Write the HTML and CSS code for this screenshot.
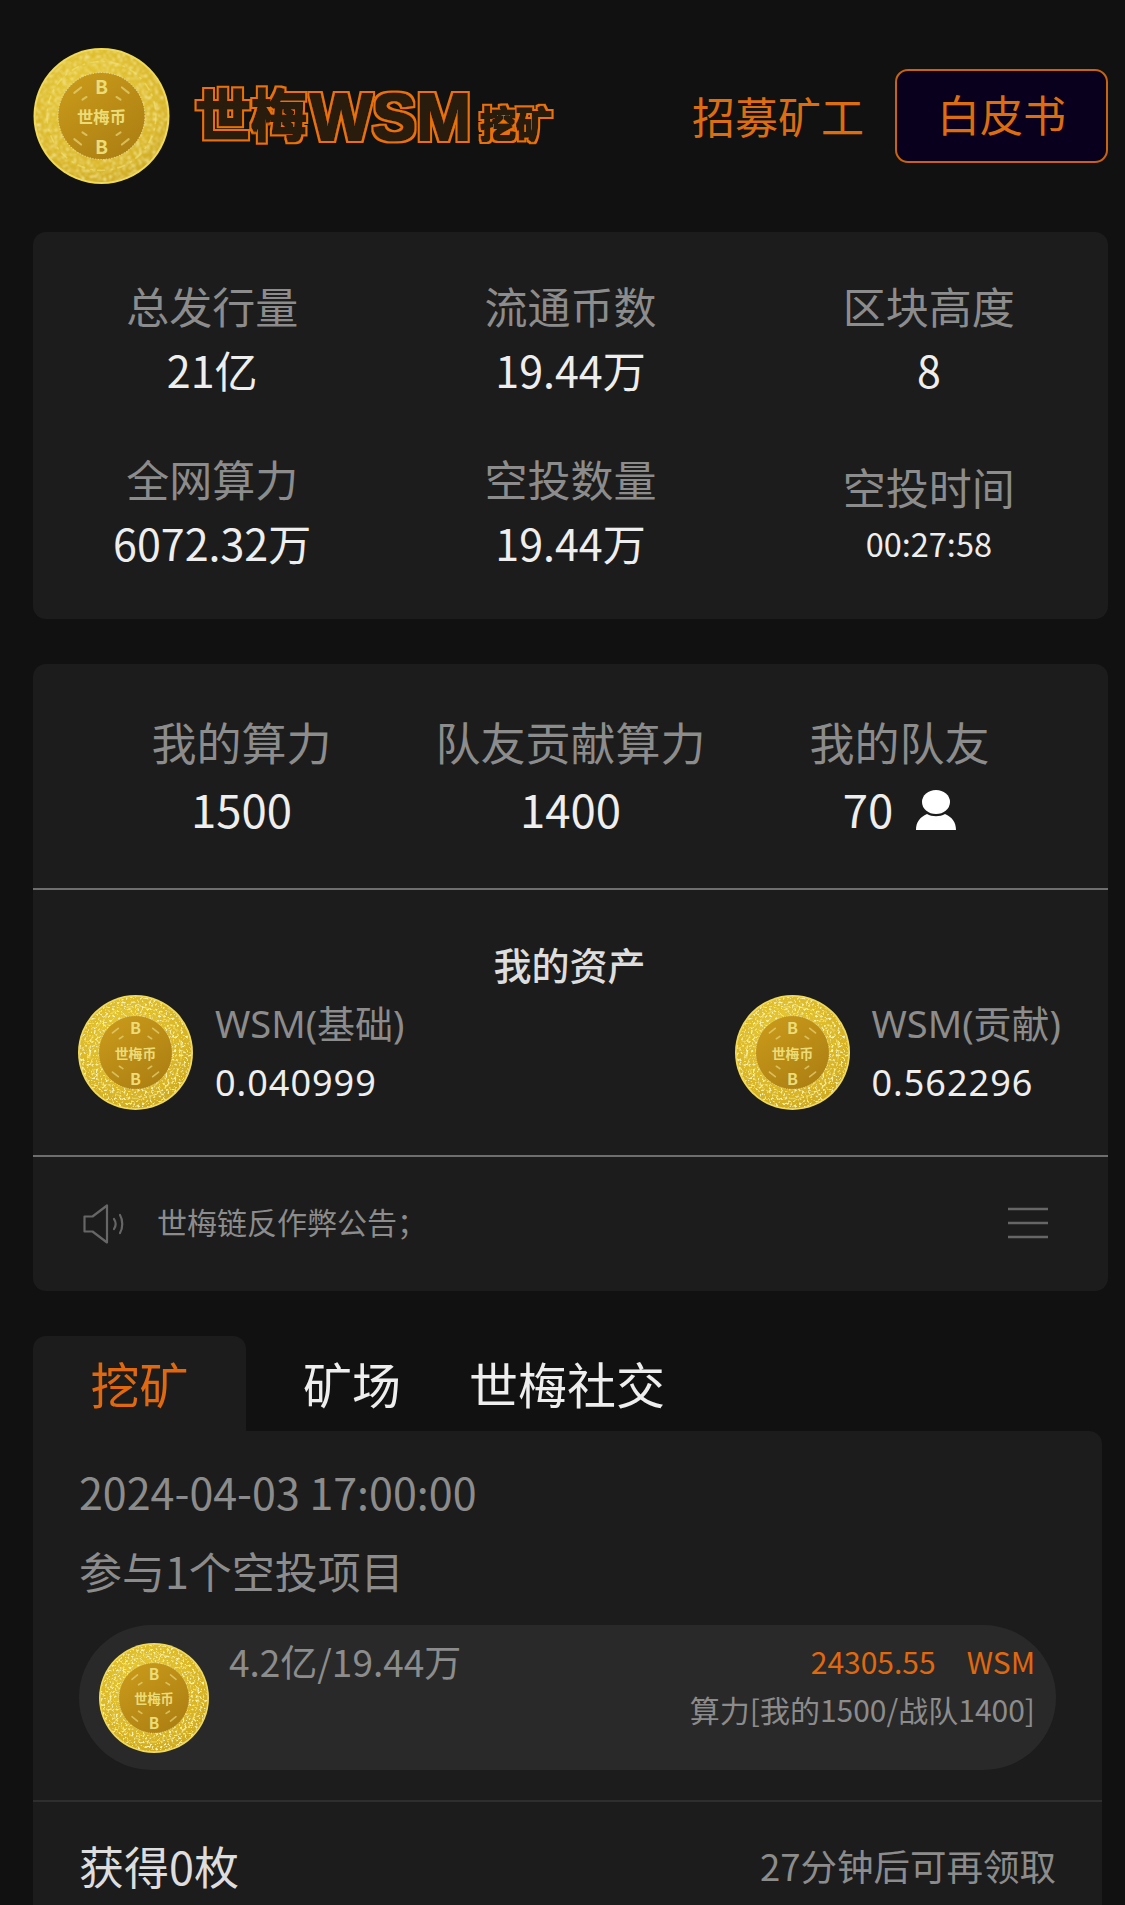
FILE: index.html
```html
<!DOCTYPE html>
<html lang="zh-CN">
<head>
<meta charset="utf-8">
<title>世梅WSM挖矿</title>
<link rel="stylesheet" href="styles.css">
</head>
<body>
<svg class="defs" width="0" height="0" aria-hidden="true">
  <defs>
    <radialGradient id="ringFill" cx="42%" cy="35%" r="75%">
      <stop offset="0" stop-color="#e8cb36"/>
      <stop offset="0.7" stop-color="#d9b526"/>
      <stop offset="1" stop-color="#c9a41e"/>
    </radialGradient>
    <linearGradient id="innerFill" x1="0" y1="0" x2="0.7" y2="1">
      <stop offset="0" stop-color="#cb9c1a"/>
      <stop offset="1" stop-color="#ad8013"/>
    </linearGradient>
    <filter id="speckle" x="0" y="0" width="100%" height="100%">
      <feTurbulence type="fractalNoise" baseFrequency="0.5" numOctaves="2" seed="7" result="n"/>
      <feColorMatrix in="n" type="matrix" values="0 0 0 0 0.96  0 0 0 0 0.88  0 0 0 0 0.45  0 0 0 -5 2.4" result="s"/>
      <feGaussianBlur in="s" stdDeviation="0.6" result="b"/>
      <feComposite in="b" in2="SourceGraphic" operator="in"/>
    </filter>
    <filter id="logoOutline" filterUnits="userSpaceOnUse" x="0" y="0" width="365" height="95">
      <feMorphology in="SourceAlpha" operator="dilate" radius="2.8" result="wide"/>
      <feFlood flood-color="#e8700a"/>
      <feComposite in2="wide" operator="in" result="edge"/>
      <feMorphology in="SourceAlpha" operator="dilate" radius="0.6" result="thick"/>
      <feFlood flood-color="#2a1a10"/>
      <feComposite in2="thick" operator="in" result="core"/>
      <feMerge result="all"><feMergeNode in="edge"/><feMergeNode in="core"/></feMerge>
      <feGaussianBlur in="all" stdDeviation="0.4"/>
    </filter>
    <symbol id="coin" viewBox="0 0 100 100">
      <circle cx="50" cy="50" r="50" fill="#f0da58"/>
      <circle cx="50" cy="50" r="48.500" fill="url(#ringFill)"/>
      <circle cx="50" cy="50" r="48.500" fill="#fff" filter="url(#speckle)"/>
      <circle cx="50" cy="50" r="40" fill="none" stroke="#f2e274" stroke-width="1.2" stroke-dasharray="6 3 2 4" opacity="0.6"/>
      <circle cx="50" cy="50" r="32" fill="url(#innerFill)" stroke="#e6d582" stroke-width="0.8" stroke-dasharray="1 1"/>
      <g stroke="#e8d578" stroke-width="1.5" stroke-linecap="round" opacity="0.7">
        <path d="M30 33l5-4M36 38l3-2M70 33l-5-4M64 38l-3-2"/>
        <path d="M30 67l5 4M36 62l3 2M70 67l-5 4M64 62l-3 2"/>
      </g>
      <g class="coin-text">
        <text x="50" y="34" font-size="14">B</text>
        <text x="50" y="78" font-size="14">B</text>
        <text x="50" y="55.500" font-size="12">世梅币</text>
      </g>
    </symbol>
  </defs>
</svg>

<div class="page">
  <header class="header">
    <svg class="coin coin-logo"><use href="#coin"/></svg>
    <svg class="logo" viewBox="0 0 365 95" width="365" height="95" role="img">
      <g filter="url(#logoOutline)">
        <text class="logo-cjk" x="3" y="74" font-size="56">世梅</text>
        <text class="logo-latin" x="118" y="78" font-size="66">WSM</text>
        <text class="logo-cjk" x="288" y="75.500" font-size="36">挖矿</text>
      </g>
    </svg>
    <a class="recruit">招募矿工</a>
    <a class="whitepaper">白皮书</a>
  </header>

  <section class="card chain">
    <div class="chain-item"><div class="label">总发行量</div><div class="value">21亿</div></div>
    <div class="chain-item"><div class="label">流通币数</div><div class="value">19.44万</div></div>
    <div class="chain-item"><div class="label">区块高度</div><div class="value">8</div></div>
    <div class="chain-item"><div class="label">全网算力</div><div class="value">6072.32万</div></div>
    <div class="chain-item"><div class="label">空投数量</div><div class="value">19.44万</div></div>
    <div class="chain-item timer"><div class="label">空投时间</div><div class="value">00:27:58</div></div>
  </section>

  <section class="card mine">
    <div class="power">
      <div class="power-item"><div class="label">我的算力</div><div class="value">1500</div></div>
      <div class="power-item"><div class="label">队友贡献算力</div><div class="value">1400</div></div>
      <div class="power-item">
        <div class="label">我的队友</div>
        <div class="value team">70
          <svg class="person" viewBox="0 0 40 40"><ellipse cx="20" cy="12" rx="14" ry="12" fill="#fff"/><path d="M0 40c0-8 4-13 11-16 5 3 13 3 18 0 7 3 11 8 11 16z" fill="#fff"/></svg>
        </div>
      </div>
    </div>
    <div class="assets">
      <h2 class="assets-title">我的资产</h2>
      <div class="assets-row">
        <div class="asset">
          <svg class="coin coin-asset"><use href="#coin"/></svg>
          <div class="asset-info"><div class="asset-name">WSM(基础)</div><div class="asset-value">0.040999</div></div>
        </div>
        <div class="asset">
          <svg class="coin coin-asset"><use href="#coin"/></svg>
          <div class="asset-info"><div class="asset-name">WSM(贡献)</div><div class="asset-value">0.562296</div></div>
        </div>
      </div>
    </div>
    <div class="notice">
      <svg class="speaker" viewBox="0 0 42 40" fill="none" stroke="#666" stroke-width="2.2" stroke-linejoin="round" stroke-linecap="round">
        <path d="M1.500 12.500h8L24 1.500v37L9.500 27.500h-8z"/>
        <path d="M31 15c2 3 2 7 0 10M37 11c3 5 3 13 0 18"/>
      </svg>
      <span class="notice-text">世梅链反作弊公告；</span>
      <svg class="menu" viewBox="0 0 40 32" stroke="#666" stroke-width="2.4"><path d="M0 2h40M0 16h40M0 30h40"/></svg>
    </div>
  </section>

  <nav class="tabs">
    <a class="tab active">挖矿</a>
    <a class="tab second">矿场</a>
    <a class="tab">世梅社交</a>
  </nav>

  <section class="panel">
    <div class="panel-body">
      <div class="round-date">2024-04-03 17:00:00</div>
      <div class="round-count">参与1个空投项目</div>
      <div class="pill">
        <svg class="coin coin-pill"><use href="#coin"/></svg>
        <div class="pill-info">
          <div class="pill-top">
            <span class="pill-supply">4.2亿/19.44万</span>
            <span class="pill-amount"><span>24305.55</span><span>WSM</span></span>
          </div>
          <div class="pill-power">算力[我的1500/战队1400]</div>
        </div>
      </div>
    </div>
    <div class="panel-foot">
      <span class="earned">获得0枚</span>
      <span class="wait">27分钟后可再领取</span>
    </div>
  </section>
</div>
</body>
</html>
```
FILE: styles.css
```css
* { box-sizing: border-box; }
html, body { margin: 0; height: 1905px; overflow: hidden; }
body {
  background: #111;
  color: #eee;
  font-family: "Noto Sans CJK SC", "Noto Sans", sans-serif;
}
.defs { position: absolute; }
.page { padding: 0 17px 0 33px; }

.coin { display: block; flex: none; }
.coin-text text {
  fill: #ecdc78;
  text-anchor: middle;
  font-family: "Noto Sans CJK SC", sans-serif;
  font-weight: 700;
}
.coin-logo { width: 137px; height: 136px; }
.coin-asset { width: 115px; height: 117px; }
.coin-pill { width: 110px; height: 110px; }

.header { height: 232px; padding-top: 48px; display: flex; align-items: flex-start; }
.logo { display: block; margin: 14px 0 0 22px; flex: none; }
.logo text { fill: #000; }
.logo-cjk { font-family: "Noto Sans CJK SC", sans-serif; font-weight: 700; }
.logo-latin { font-family: "Liberation Sans", sans-serif; font-weight: 700; }
.recruit { margin: 44px 0 0 auto; font-size: 43px; line-height: 46px; color: #dc6d10; }
.whitepaper {
  margin: 21px 0 0 31px;
  width: 213px;
  height: 94px;
  border: 2px solid #c8640f;
  border-radius: 13px;
  background: #08001c;
  color: #dc6d10;
  font-size: 43px;
  line-height: 85px;
  text-align: center;
}

.card { background: #1c1c1c; border-radius: 13px; }
.label { color: #8c8c8c; }

.chain {
  display: grid;
  grid-template-columns: repeat(3, 1fr);
  align-content: start;
  row-gap: 45px;
  padding: 41px 0 0;
  height: 387px;
  text-align: center;
}
.chain-item .label, .chain-item .value { font-size: 43px; line-height: 64px; }
.chain-item .value { color: #eee; }
.timer .label { margin-top: 8px; line-height: 64px; }
.timer .value { font-size: 32.5px; line-height: 50px; }

.mine { margin-top: 45px; height: 627px; }
.power {
  display: grid;
  grid-template-columns: repeat(3, 329px);
  justify-content: center;
  padding-top: 45px;
  height: 226px;
  text-align: center;
  border-bottom: 2px solid #6e6e6e;
}
.power .label { font-size: 45px; line-height: 66px; }
.power .value { font-size: 45.5px; line-height: 66px; color: #eee; }
.team { display: flex; justify-content: center; align-items: center; gap: 23px; }
.person { width: 40px; height: 40px; display: block; margin-top: 3px; }

.assets { height: 267px; padding: 49px 47px 0 45px; border-bottom: 2px solid #6e6e6e; }
.assets-title { margin: 0 0 3px; font-size: 38px; line-height: 50px; font-weight: 500; text-align: center; color: #ddd; }
.assets-row { display: flex; justify-content: space-between; }
.asset { display: flex; align-items: center; gap: 22px; }
.asset-name { font-size: 38px; line-height: 62px; color: #8c8c8c; font-family: "Noto Sans", "Noto Sans CJK SC", sans-serif; }
.asset-value { font-size: 36px; line-height: 58px; color: #eee; font-family: "Noto Sans", "Noto Sans CJK SC", sans-serif; letter-spacing: 1px; }

.notice { height: 134px; display: flex; align-items: center; padding: 0 60px 0 50px; }
.speaker { width: 42px; height: 40px; flex: none; }
.notice-text { margin-left: 32px; padding-bottom: 6px; font-size: 30px; color: #8c8c8c; flex: 1; }
.menu { width: 40px; height: 32px; flex: none; margin-bottom: 2px; }

.tabs { margin-top: 45px; height: 95px; display: flex; align-items: stretch; }
.tab { padding: 0 34px; font-size: 49px; line-height: 93px; color: #eee; }
.tab.active { padding: 0 57.500px; background: #1c1c1c; color: #e0680f; border-radius: 13px 13px 0 0; }
.tab.second { margin-left: 23px; }

.panel { margin-right: 6px; height: 474px; background: #1c1c1c; border-radius: 0 13px 0 0; }
.panel-body { height: 371px; padding: 28px 46px 0; border-bottom: 2px solid #2e2e2e; }
.round-date, .round-count { font-size: 43px; line-height: 64px; color: #8c8c8c; }
.round-count { margin-top: 15px; }
.pill {
  margin-top: 23px;
  height: 145px;
  display: flex;
  align-items: center;
  gap: 20px;
  padding: 0 21px 0 20px;
  background: #292929;
  border-radius: 73px;
}
.pill-info { flex: 1; height: 145px; padding-top: 12px; }
.pill-top { display: flex; justify-content: space-between; height: 48px; line-height: 48px; }
.pill-supply { font-size: 37px; color: #8c8c8c; }
.pill-amount { display: flex; gap: 31px; font-size: 30px; color: #e0680f; }
.pill-power { font-size: 30px; line-height: 48px; text-align: right; color: #8c8c8c; }

.panel-foot { display: flex; justify-content: space-between; align-items: center; height: 130px; padding: 0 46px 4px; }
.earned { font-size: 45px; color: #ddd; }
.wait { font-size: 36.5px; color: #8c8c8c; }
```
